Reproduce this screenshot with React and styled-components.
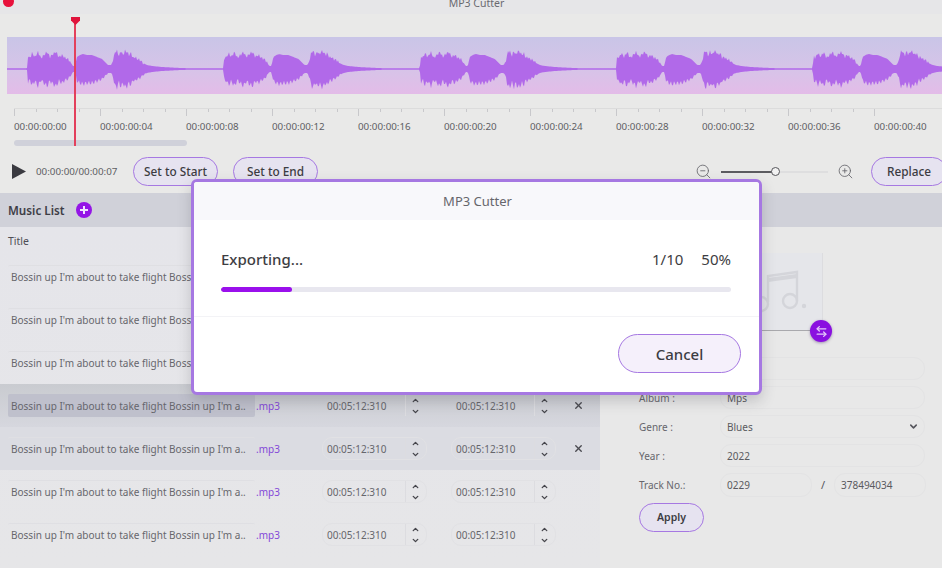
import React from 'react'
import styled, {createGlobalStyle} from 'styled-components'
import {ZoomIn, ZoomOut, X, ChevronUp, ChevronDown, ArrowLeftRight} from 'lucide-react'

const FONT = '"Noto Sans", "Open Sans", "Liberation Sans", sans-serif'
const PURPLE = '#a678e2'
const NAME = "Bossin up I'm about to take flight Bossin up I'm a.."
const LABELS = ['00:00:00:00', '00:00:00:04', '00:00:00:08', '00:00:00:12', '00:00:00:16', '00:00:00:20', '00:00:00:24', '00:00:00:28', '00:00:00:32', '00:00:00:36', '00:00:00:40']

// outline of one phrase of the wave form: [offset in px, half height in px]
const PHRASE = [
  [0, 1], [1, 13], [3, 11], [5, 16], [8, 12], [11, 17], [14, 11], [17, 14], [20, 17], [23, 12], [26, 15], [29, 17],
  [32, 12], [35, 14], [38, 11], [41, 10], [44, 6], [46, 3], [48, 3], [50, 12], [53, 14], [56, 15], [60, 14], [65, 14],
  [70, 12], [75, 10], [79, 6], [81, 4], [84, 4], [86, 8], [88, 17], [90, 18], [92, 13], [94, 18], [96, 14], [98, 18],
  [100, 17], [102, 14], [104, 16], [106, 11], [108, 12], [110, 10], [113, 9], [116, 6], [120, 4], [125, 3], [135, 2],
  [150, 1.2], [160, 0.8], [196.4, 0.8],
]

const amplitude = t => {
  const next = PHRASE.findIndex(p => p[0] >= t)
  if (next <= 0) return PHRASE[0][1]
  const [x0, a0] = PHRASE[next - 1]
  const [x1, a1] = PHRASE[next]
  return a0 + ((a1 - a0) * (t - x0)) / (x1 - x0)
}

const wavePath = () => {
  const top = []
  const bottom = []
  for (let x = 0; x <= 935; x += 1) {
    const t = (x + 176.4) % 196.4
    const a = amplitude(t)
    const rough = a > 6 && (t < 46 || t > 86) ? 1.5 * Math.sin(x * 2.3) : 0
    const skew = a > 5 ? 1 + 0.16 * Math.sin(x * 1.9) : 1
    top.push(`${x},${32 - a - rough}`)
    bottom.unshift(`${x},${32 + a * skew}`)
  }
  return `M${top.join(' L')} L${bottom.join(' L')} Z`
}

const ticks = Array.from({length: 41}, (_, i) => i)

const Spinner = () => (
  <SpinBox>
    <ChevronUp size={9} strokeWidth={3.6} />
    <ChevronDown size={9} strokeWidth={3.6} />
  </SpinBox>
)

const TimeField = ({bare}) => (
  <TimeBox $bare={bare}>
    <TimeText>00:05:12:310</TimeText>
    <Spinner />
  </TimeBox>
)

const Row = ({tone, removable}) => (
  <RowBox $tone={tone}>
    <NameField $selected={tone === 'selected'}>{NAME}</NameField>
    <Ext>.mp3</Ext>
    <TimeField bare={tone === 'selected'} />
    <TimeField bare={tone === 'selected'} />
    {removable ? <RemoveBtn><X size={11} strokeWidth={3} /></RemoveBtn> : null}
  </RowBox>
)

const App = () => {
  return (
    <Page>
      <Global />
      <RedDot />
      <TitleBar>MP3 Cutter</TitleBar>
      <Timeline>
        <Playhead><PlayheadCap /></Playhead>
        <Band>
          <svg width="935" height="57" viewBox="0 0 935 57">
            <path d={wavePath()} fill="#b169e9" />
          </svg>
        </Band>
        <Ruler>
          {ticks.map(i => <Tick key={i} $major={i % 4 === 0} />)}
        </Ruler>
        <Labels>
          {LABELS.map(l => <Label key={l}>{l}</Label>)}
        </Labels>
        <ScrollThumb />
      </Timeline>

      <Controls>
        <PlayIcon />
        <Clock>00:00:00/00:00:07</Clock>
        <PillButton>Set to Start</PillButton>
        <PillButton>Set to End</PillButton>
        <ZoomGroup>
          <ZoomOut size={17} strokeWidth={1.2} />
          <Slider><SliderFill /><SliderKnob /></Slider>
          <ZoomIn size={17} strokeWidth={1.2} />
        </ZoomGroup>
        <ReplaceButton>Replace</ReplaceButton>
      </Controls>

      <ListHeader>
        <ListTitle>Music List</ListTitle>
        <AddButton>
          <svg width="10" height="10" viewBox="0 0 10 10">
            <path d="M5 1v8M1 5h8" stroke="#f0e4ff" strokeWidth="2" />
          </svg>
        </AddButton>
      </ListHeader>

      <Main>
        <ListPanel>
          <ColumnTitle>Title</ColumnTitle>
          <Row />
          <Row />
          <Row />
          <Row tone="selected" removable />
          <Row tone="hover" removable />
          <Row />
          <Row />
        </ListPanel>

        <InfoPanel>
          <Cover>
            <svg width="60" height="46" viewBox="0 0 60 46" fill="none" stroke="#d4d5da" strokeWidth="2.4">
              <path d="M19 33V7l29-4v29" />
              <path d="M19 11l29-4" strokeWidth="4" />
              <circle cx="12" cy="35" r="7" />
              <circle cx="41" cy="32" r="7" />
              <circle cx="55" cy="37" r="1" />
            </svg>
            <SwapButton><ArrowLeftRight size={13} strokeWidth={2.4} /></SwapButton>
          </Cover>
          <FormRow><FieldLabel>Artist :</FieldLabel><Field /></FormRow>
          <FormRow><FieldLabel>Album :</FieldLabel><Field>Mps</Field></FormRow>
          <FormRow>
            <FieldLabel>Genre :</FieldLabel>
            <Field>Blues<ChevronDown size={11} strokeWidth={3.4} color="#55555c" /></Field>
          </FormRow>
          <FormRow><FieldLabel>Year :</FieldLabel><Field>2022</Field></FormRow>
          <FormRow>
            <FieldLabel>Track No.:</FieldLabel>
            <TrackField>0229</TrackField>
            <Slash>/</Slash>
            <TrackField>378494034</TrackField>
          </FormRow>
          <ApplyButton>Apply</ApplyButton>
        </InfoPanel>
      </Main>

      <Dialog>
        <DialogHead>MP3 Cutter</DialogHead>
        <DialogBody>
          <StatusRow>
            <Status>Exporting...</Status>
            <Count>1/10</Count>
            <Percent>50%</Percent>
          </StatusRow>
          <Track><TrackFill style={{width: `${(71 / 510) * 100}%`}} /></Track>
        </DialogBody>
        <DialogFoot>
          <CancelButton>Cancel</CancelButton>
        </DialogFoot>
      </Dialog>
    </Page>
  )
}

const Global = createGlobalStyle`
  html, body {
    margin: 0;
    padding: 0;
    background: #e8e8e9;
  }
  * {
    box-sizing: border-box;
  }
`

const Page = styled.div`
  position: relative;
  width: 942px;
  height: 568px;
  overflow: hidden;
  background: #e9e9e8;
  font-family: ${FONT};
  color: #55555c;
`

const RedDot = styled.div`
  position: absolute;
  left: 3px;
  top: -4px;
  width: 11px;
  height: 11px;
  border-radius: 50%;
  background: #e8123c;
`

const TitleBar = styled.div`
  height: 14px;
  background: #e6e6e8;
  font-size: 10.5px;
  line-height: 6px;
  text-align: center;
  color: #6a6a70;
  padding-left: 11px;
`

const Timeline = styled.div`
  position: relative;
  padding-top: 23px;
  height: 143px;
`

const Playhead = styled.div`
  position: absolute;
  left: 74px;
  top: 3px;
  width: 2px;
  height: 129px;
  background: #e3405c;
`

const PlayheadCap = styled.span`
  position: absolute;
  left: -3px;
  top: 0;
  width: 9px;
  height: 8px;
  background: #e0143c;
  clip-path: polygon(0 0, 100% 0, 100% 45%, 50% 100%, 0 45%);
`

const Band = styled.div`
  margin-left: 7px;
  height: 57px;
  background: linear-gradient(180deg, #c9c5e7 0%, #d6c4e8 55%, #e3bce8 100%);

  svg {
    display: block;
  }
`

const Ruler = styled.div`
  display: flex;
  align-items: flex-start;
  margin: 14px 0 0 14px;
  height: 8px;
  border-top: 1px solid #dcdcdc;
`

const Tick = styled.span`
  flex: 0 0 21.5px;
  width: 1px;
  height: ${props => props.$major ? '7px' : '3px'};
  border-left: 1px solid #c8c8cb;
`

const Labels = styled.div`
  display: flex;
  margin: 4px 0 0 14px;
`

const Label = styled.span`
  flex: 0 0 86px;
  font-size: 9.8px;
  line-height: 14px;
  color: #5e5e64;
`

const ScrollThumb = styled.div`
  width: 173px;
  height: 6px;
  margin: 6px 0 0 14px;
  border-radius: 3px;
  background: #d0d1da;
`

const Controls = styled.div`
  display: flex;
  align-items: center;
  height: 29px;
  padding-left: 12px;
`

const PlayIcon = styled.span`
  flex: none;
  width: 14px;
  height: 15px;
  background: #3a3a40;
  clip-path: polygon(0 0, 100% 50%, 0 100%);
`

const Clock = styled.span`
  flex: none;
  width: 97px;
  margin-left: 10px;
  font-size: 9.8px;
  color: #5e5e64;
`

const PillButton = styled.button`
  flex: none;
  width: 85px;
  height: 29px;
  margin-right: 15px;
  padding: 0 0 2px;
  border: 1px solid ${PURPLE};
  border-radius: 15px;
  background: #e6e3f0;
  color: #3c3c42;
  font-family: ${FONT};
  font-size: 11.8px;
  font-weight: 500;
`

const ZoomGroup = styled.div`
  flex: none;
  display: flex;
  align-items: center;
  gap: 9px;
  margin-left: 362px;
  color: #66666c;
`

const Slider = styled.div`
  position: relative;
  width: 107px;
  height: 2px;
  background: #dededf;
`

const SliderFill = styled.div`
  width: 54px;
  height: 2px;
  background: #5c5c60;
`

const SliderKnob = styled.div`
  position: absolute;
  left: 50px;
  top: -4px;
  width: 9px;
  height: 9px;
  border-radius: 50%;
  border: 1px solid #55555a;
  background: #f2f2f2;
`

const ReplaceButton = styled(PillButton)`
  margin: 0 0 0 17px;
  width: 76px;
`

const ListHeader = styled.div`
  display: flex;
  align-items: center;
  gap: 11px;
  height: 34px;
  margin-top: 7px;
  padding-left: 8px;
  background: #d0d1d9;
`

const ListTitle = styled.span`
  font-size: 11.7px;
  font-weight: 600;
  color: #3e3e46;
`

const AddButton = styled.span`
  display: flex;
  align-items: center;
  justify-content: center;
  width: 16px;
  height: 16px;
  border-radius: 50%;
  background: #9415e6;
`

const Main = styled.div`
  display: grid;
  grid-template-columns: 600px 1fr;
`

const ListPanel = styled.div`
  height: 341px;
  background: linear-gradient(180deg, #e5e5ea 0%, #e6e6e8 100%);
`

const ColumnTitle = styled.div`
  height: 28px;
  padding: 6px 0 0 8px;
  font-size: 10.5px;
  line-height: 16px;
  color: #4e4e56;
`

const ROW_TONES = {
  selected: 'linear-gradient(180deg, #c9cbd0 0%, #d6d7de 100%)',
  hover: '#dbdce2',
}

const RowBox = styled.div`
  display: flex;
  align-items: center;
  height: 43px;
  padding-left: 8px;
  background: ${props => ROW_TONES[props.$tone] || 'transparent'};
`

const NameField = styled.div`
  flex: none;
  width: 247px;
  height: 23px;
  padding-left: 3px;
  font-size: 10px;
  line-height: 22px;
  white-space: nowrap;
  overflow: hidden;
  color: #66666c;
  border-radius: 2px;
  background: ${props => props.$selected ? '#bfc0cc' : 'transparent'};
  border-top: 1px solid ${props => props.$selected ? '#bfc0cc' : '#dfdfe3'};
`

const Ext = styled.span`
  flex: none;
  width: 67px;
  padding-left: 1px;
  font-size: 10px;
  color: #8448d8;
`

const TimeBox = styled.div`
  flex: none;
  display: flex;
  align-items: center;
  width: 105px;
  height: 23px;
  margin-right: 24px;
  border: 1px solid ${props => props.$bare ? 'transparent' : '#e1e1e4'};
  border-radius: 10px;
`

const TimeText = styled.span`
  width: 82px;
  padding-left: 4px;
  font-size: 10px;
  color: #66666c;
`

const SpinBox = styled.span`
  display: flex;
  flex-direction: column;
  align-items: center;
  justify-content: center;
  gap: 2px;
  width: 20px;
  height: 21px;
  border-left: 1px solid #dcdce0;
  color: #45454b;
`

const RemoveBtn = styled.span`
  display: flex;
  margin-left: -7px;
  color: #4a4a50;
`

const InfoPanel = styled.div`
  height: 341px;
  padding: 26px 17px 0 39px;
  background: #e8e8e8;
`

const Cover = styled.div`
  position: relative;
  display: flex;
  align-items: center;
  justify-content: center;
  width: 125px;
  height: 78px;
  margin: 0 0 23px 59px;
  padding-left: 38px;
  background: #e5e6ea;
  border-right: 1px solid #dcdcdf;
  border-bottom: 1px solid #a9a9ad;
`

const SwapButton = styled.span`
  position: absolute;
  right: -10px;
  bottom: -12px;
  display: flex;
  align-items: center;
  justify-content: center;
  width: 22px;
  height: 22px;
  border-radius: 50%;
  background: #8a10e0;
  color: #e3c8fa;
  box-shadow: 0 1px 3px rgba(70, 40, 110, .45);
`

const FormRow = styled.div`
  display: flex;
  align-items: center;
  height: 29px;
`

const FieldLabel = styled.span`
  width: 81px;
  flex: none;
  font-size: 10px;
  color: #66666c;
`

const Field = styled.div`
  flex: none;
  display: flex;
  align-items: center;
  justify-content: space-between;
  width: 205px;
  height: 23px;
  padding: 0 5px 0 6px;
  border: 1px solid #e3e3e4;
  border-radius: 11px;
  font-size: 10px;
  color: #5a5a60;
`

const TrackField = styled(Field)`
  width: 92px;
  height: 24px;
  justify-content: flex-start;
`

const Slash = styled.span`
  flex: none;
  width: 22px;
  text-align: center;
  font-size: 11px;
`

const ApplyButton = styled(PillButton)`
  display: block;
  width: 65px;
  margin: 4px 0 0;
  font-size: 10.5px;
  font-weight: 600;
`

const Dialog = styled.div`
  position: absolute;
  left: 191px;
  top: 179px;
  display: flex;
  flex-direction: column;
  width: 571px;
  height: 216px;
  border: 3px solid ${PURPLE};
  border-radius: 6px;
  background: #fff;
  overflow: hidden;
  box-shadow: 0 6px 14px rgba(60, 60, 70, .22);
`

const DialogHead = styled.div`
  height: 38px;
  background: #f8f8fb;
  font-size: 13px;
  line-height: 38px;
  text-align: center;
  color: #66666c;
  padding-left: 2px;
`

const DialogBody = styled.div`
  height: 97px;
  padding: 27px 28px 0 27px;
  border-bottom: 1px solid #f3f3f6;
`

const StatusRow = styled.div`
  display: flex;
  align-items: center;
  height: 24px;
  font-size: 15px;
  color: #3d3d42;
`

const Status = styled.span`
  flex: 1;
  font-weight: 500;
`

const Count = styled.span`
  margin-right: 18px;
`

const Percent = styled.span``

const Track = styled.div`
  height: 5px;
  margin-top: 16px;
  border-radius: 3px;
  background: #e8e7ef;
  overflow: hidden;
`

const TrackFill = styled.div`
  height: 100%;
  border-radius: 3px;
  background: #9a10ec;
`

const DialogFoot = styled.div`
  display: flex;
  justify-content: flex-end;
  padding: 17px 18px 0 0;
`

const CancelButton = styled.button`
  width: 123px;
  height: 39px;
  padding: 0;
  border: 1px solid ${PURPLE};
  border-radius: 20px;
  background: #f5f0fb;
  color: #3c3c42;
  font-family: ${FONT};
  font-size: 15px;
  font-weight: 500;
`

export default App
